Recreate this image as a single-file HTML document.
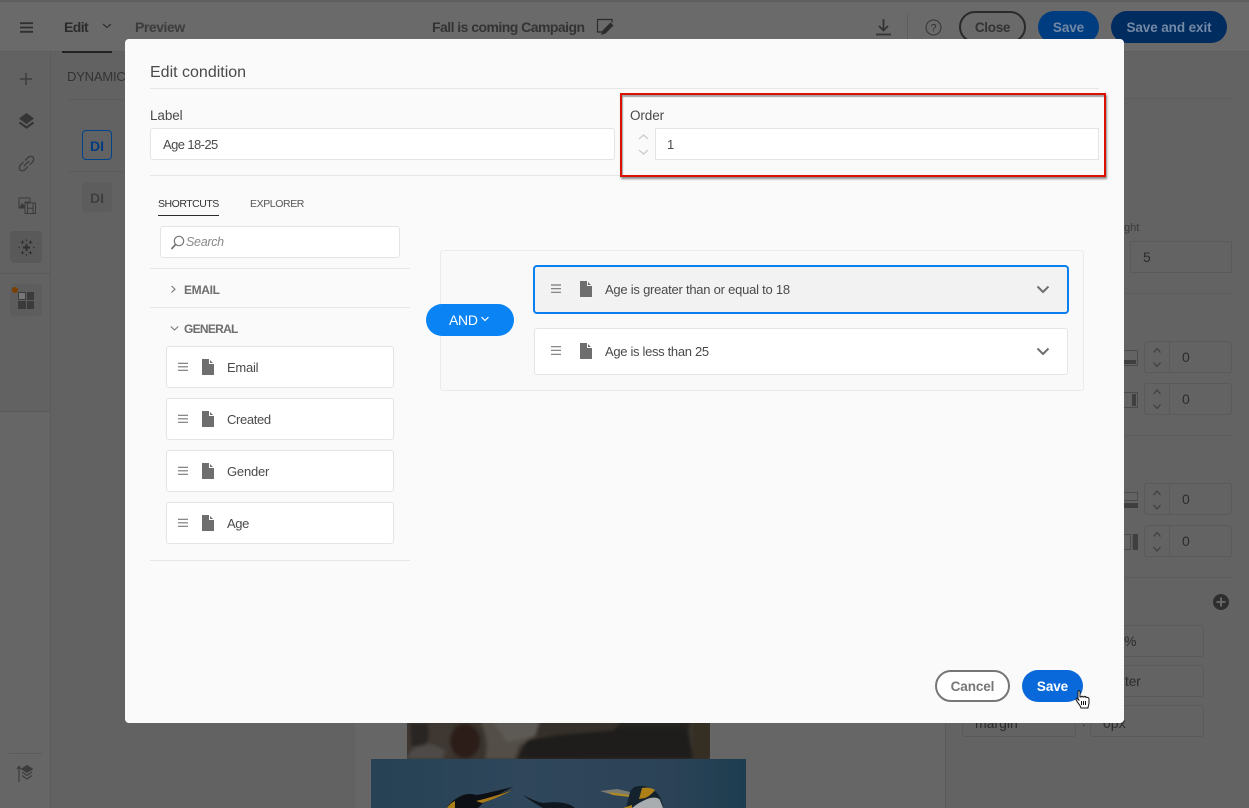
<!DOCTYPE html>
<html><head><meta charset="utf-8"><style>
html,body{margin:0;padding:0;background:#626262}
#r{position:relative;width:1249px;height:808px;overflow:hidden;background:#626262;font-family:"Liberation Sans",sans-serif;color:#4b4b4b;font-size:13px}
#r div,#r svg{position:absolute;box-sizing:border-box}
.t{white-space:nowrap;line-height:20px;height:20px}
.f{border:1px solid #5a5a5a;border-radius:3px}
.w{background:#fff;border:1px solid #e4e4e4;border-radius:3px}
.l{background:#e6e6e6;height:1px}
.n{color:#2c2c2c;font-size:14px}
.x{letter-spacing:-.25px;color:#4a4a4a}
</style></head><body><div id="r">
<!-- background -->
<div style="left:0;top:0;width:1249px;height:52px;background:#6a6a6a;border-bottom:1px solid #5e5e5e"></div>
<div style="left:0;top:0;width:1249px;height:2px;background:#5f5f5f"></div>
<div style="left:0;top:52px;width:51px;height:360px;background:#626262"></div>
<div style="left:0;top:412px;width:51px;height:396px;background:#666"></div>
<div style="left:0;top:411px;width:51px;height:1px;background:#5a5a5a"></div>
<div style="left:50px;top:52px;width:1px;height:756px;background:#5c5c5c"></div>
<div style="left:355px;top:700px;width:1px;height:108px;background:#5e5e5e"></div>
<div style="left:355px;top:720px;width:16px;height:88px;background:#666"></div>
<div style="left:945px;top:52px;width:304px;height:756px;background:#636363"></div>
<div style="left:710px;top:720px;width:235px;height:88px;background:#666"></div>
<div style="left:356px;top:720px;width:51px;height:40px;background:#666"></div>
<div style="left:945px;top:52px;width:1px;height:756px;background:#5a5a5a"></div>

<!-- header -->
<svg style="left:20px;top:22px" width="13" height="11"><path d="M0 1.200H13M0 5.500H13M0 9.800H13" stroke="#2f2f2f" stroke-width="1.800"/></svg>
<div class="t" style="left:64px;top:17px;font-weight:bold;color:#2b2b2b;font-size:14px;letter-spacing:-.6px">Edit</div>
<svg style="left:102px;top:23px" width="10" height="6"><path d="M1 1L5 4.500L9 1" fill="none" stroke="#2f2f2f" stroke-width="1.200"/></svg>
<div style="left:62px;top:51px;width:50px;height:2px;background:#222"></div>
<div class="t" style="left:135px;top:17px;font-weight:bold;color:#3c3c3c;font-size:14px;letter-spacing:-.45px">Preview</div>
<div class="t" style="left:432px;top:17px;font-weight:bold;color:#333;font-size:14px;letter-spacing:-.54px">Fall is coming Campaign</div>
<svg style="left:595px;top:18px" width="20" height="18"><path d="M8 14H2.500V1.500H17V4.500" fill="none" stroke="#2c2c2c" stroke-width="1.200"/><path d="M6 17L7.500 12.500L15.500 4.500L18.500 7.500L10.500 15.500Z" fill="#2c2c2c"/></svg>
<svg style="left:875px;top:18px" width="17" height="18"><path d="M8.500 1V12M4 8L8.500 12.500L13 8M1 16.500H16" fill="none" stroke="#333" stroke-width="1.800"/></svg>
<div style="left:907px;top:13px;width:1px;height:26px;background:#5e5e5e"></div>
<svg style="left:925px;top:19px" width="17" height="17"><circle cx="8.500" cy="8.500" r="7.500" fill="none" stroke="#333" stroke-width="1"/><text x="8.500" y="12.500" text-anchor="middle" font-family="Liberation Sans" font-size="11" fill="#333">?</text></svg>
<div style="left:959px;top:11px;width:67px;height:32px;border:2px solid #2a2a2a;border-radius:16px"></div>
<div class="t" style="left:959px;top:18px;width:67px;text-align:center;font-weight:bold;color:#333;font-size:13.500px;letter-spacing:-.3px">Close</div>
<div style="left:1038px;top:11px;width:61px;height:32px;background:#003c80;border-radius:16px"></div>
<div class="t" style="left:1038px;top:18px;width:61px;text-align:center;font-weight:bold;color:#7389a5;font-size:13.500px;letter-spacing:-.1px">Save</div>
<div style="left:1111px;top:11px;width:116px;height:32px;background:#002c60;border-radius:16px"></div>
<div class="t" style="left:1111px;top:18px;width:116px;text-align:center;font-weight:bold;color:#7389a5;font-size:13.500px;letter-spacing:-.1px">Save and exit</div>

<!-- left rail -->
<svg style="left:20px;top:73px" width="12" height="12"><path d="M6 0V12M0 6H12" stroke="#3c3c3c" stroke-width="1.600"/></svg>
<svg style="left:18px;top:112px" width="17" height="18"><path d="M8.500 1L16 6.500L8.500 12L1 6.500Z" fill="#353535"/><path d="M1.500 10.500L8.500 15.500L15.500 10.500" fill="none" stroke="#353535" stroke-width="2.200"/></svg>
<svg style="left:18px;top:155px" width="17" height="17"><path d="M7 5.500L10 2.500C11.500 1 14 1 15 2S16 5.500 14.500 7L11.500 10M10 11.500L7 14.500C5.500 16 3 16 2 15S1 11.500 2.500 10L5.500 7M6 11L11 6" fill="none" stroke="#3e3e3e" stroke-width="1.400"/></svg>
<svg style="left:18px;top:197px" width="18" height="17"><path d="M1 1H12V5H7V11H1Z" fill="none" stroke="#3a3a3a"/><path d="M1 11L4 6L7 9V11Z" fill="#3a3a3a"/><rect x="7" y="6" width="10.500" height="10.500" fill="none" stroke="#3a3a3a"/><path d="M9.500 6V16.500M15 6V16.500M9.500 11.200H15" stroke="#3a3a3a"/></svg>
<div style="left:10px;top:231px;width:32px;height:32px;background:#595959;border-radius:4px"></div>
<svg style="left:18px;top:239px" width="17" height="17" fill="none" stroke="#303030"><path d="M8.500 5V12M5 8.500H12" stroke-width="2"/><path d="M4.500 1.500V5M2.700 3.200H6.300M12.500 1.500V5M10.700 3.200H14.300M4.500 12V15.500M2.700 13.800H6.300M12.500 12V15.500M10.700 13.800H14.300" stroke-width="1"/><path d="M.5 8.500H2M15 8.500H16.500M8.500 .5V2M8.500 15V16.500" stroke-width="1.200"/></svg>
<div style="left:0;top:273px;width:51px;height:1px;background:#5a5a5a"></div>
<div style="left:10px;top:284px;width:32px;height:32px;background:#5d5d5d;border-radius:4px"></div>
<div style="left:18px;top:292px;width:7.500px;height:7.500px;border:1px solid #3b3b3b;background:#777"></div>
<div style="left:27px;top:292px;width:7px;height:7.500px;background:#3b3b3b"></div>
<div style="left:18px;top:301px;width:7.500px;height:7.500px;background:#3b3b3b"></div>
<div style="left:27px;top:301px;width:7px;height:7.500px;background:#3b3b3b"></div>
<div style="left:12px;top:287px;width:6px;height:6px;border-radius:50%;background:#7d3f00"></div>
<div style="left:9px;top:753px;width:33px;height:1px;background:#5a5a5a"></div>
<svg style="left:16px;top:764px" width="20" height="18" fill="none" stroke="#3c3c3c"><path d="M3 18V3M1 5L3 2.500L5 5" stroke-width="1.200"/><path d="M11 1L17.500 5L11 9L4.500 5Z" fill="#3c3c3c" stroke="none"/><path d="M6 8L11 11.500L16 8M6 11.500L11 15L16 11.500" stroke-width="1.200"/></svg>

<!-- left panel residual -->
<div class="t" style="left:67px;top:67px;color:#333;font-size:13px;letter-spacing:-.2px">DYNAMIC</div>
<div style="left:67px;top:99px;width:58px;height:1px;background:#5c5c5c"></div>
<div style="left:82px;top:130px;width:30px;height:30px;border:1px solid #00428c;border-radius:4px;background:#626262"></div>
<div class="t" style="left:82px;top:136px;width:30px;text-align:center;font-weight:bold;font-size:14px;color:#003c80">DI</div>
<div style="left:67px;top:171px;width:58px;height:1px;background:#5c5c5c"></div>
<div style="left:82px;top:182px;width:30px;height:30px;border-radius:4px;background:#5d5d5d"></div>
<div class="t" style="left:82px;top:188px;width:30px;text-align:center;font-weight:bold;font-size:14px;color:#3f3f3f">DI</div>

<!-- right panel residual -->
<div class="t" style="left:1124px;top:218px;font-size:11px;color:#3a3a3a">ght</div>
<div style="left:1124px;top:98px;width:108px;height:1px;background:#5c5c5c"></div>
<div class="f" style="left:1130px;top:241px;width:102px;height:32px;border-radius:0"></div>
<div class="t n" style="left:1143px;top:247px">5</div>
<div style="left:1124px;top:293px;width:108px;height:1px;background:#5c5c5c"></div>
<div style="left:1124px;top:435px;width:108px;height:1px;background:#5c5c5c"></div>
<div style="left:1124px;top:577px;width:108px;height:1px;background:#5c5c5c"></div>
<!-- steppers -->
<div class="f" style="left:1144px;top:341px;width:88px;height:32px"></div><div style="left:1169px;top:341px;width:1px;height:32px;background:#5a5a5a"></div>
<div class="f" style="left:1144px;top:383px;width:88px;height:32px"></div><div style="left:1169px;top:383px;width:1px;height:32px;background:#5a5a5a"></div>
<div class="f" style="left:1144px;top:483px;width:88px;height:32px"></div><div style="left:1169px;top:483px;width:1px;height:32px;background:#5a5a5a"></div>
<div class="f" style="left:1144px;top:525px;width:88px;height:32px"></div><div style="left:1169px;top:525px;width:1px;height:32px;background:#5a5a5a"></div>
<svg style="left:1144px;top:341px" width="26" height="220" fill="none" stroke="#3e3e3e" stroke-width="1.200"><path d="M9.500 11.500L13 7.500L16.500 11.500M9.500 21.500L13 25.500L16.500 21.500M9.500 53L13 49L16.500 53M9.500 63.500L13 67.500L16.500 63.500M9.500 154L13 150L16.500 154M9.500 164L13 168L16.500 164M9.500 195.500L13 191.500L16.500 195.500M9.500 206L13 210L16.500 206"/></svg>
<div class="t n" style="left:1182px;top:347px">0</div>
<div class="t n" style="left:1182px;top:389px">0</div>
<div class="t n" style="left:1182px;top:489px">0</div>
<div class="t n" style="left:1182px;top:531px">0</div>
<svg style="left:1124px;top:348px" width="15" height="204"><path d="M0 2.500H13.500V17.500H0" fill="none" stroke="#4c4c4c"/><rect x="0" y="12" width="12" height="4" fill="#3f3f3f"/><path d="M0 44.500H13.500V59.500H0" fill="none" stroke="#4c4c4c"/><rect x="8" y="46" width="4" height="12" fill="#3f3f3f"/><path d="M0 144.500H13.500V152.500H0" fill="none" stroke="#4c4c4c"/><rect x="0" y="155" width="14" height="5" fill="#3f3f3f"/><path d="M0 186.500H6.500V201.500H0" fill="none" stroke="#4c4c4c"/><rect x="8.700" y="186" width="5.300" height="16" fill="#3f3f3f"/></svg>
<svg style="left:1213px;top:594px" width="16" height="16"><circle cx="8" cy="8" r="8" fill="#2e2e2e"/><path d="M8 3.500V12.500M3.500 8H12.500" stroke="#666" stroke-width="2"/></svg>
<div class="f" style="left:1090px;top:625px;width:114px;height:32px"></div>
<div class="t n" style="left:1124px;top:631px">%</div>
<div class="f" style="left:1090px;top:665px;width:114px;height:32px"></div>
<div class="t n" style="left:1125px;top:671px;letter-spacing:-.3px">ter</div>
<div class="f" style="left:962px;top:705px;width:114px;height:32px"></div>
<div class="t n" style="left:975px;top:713px">margin</div>
<div class="t" style="left:1082px;top:712px;color:#2c2c2c;font-size:12px">:</div>
<div class="f" style="left:1090px;top:705px;width:114px;height:32px"></div>
<div class="t n" style="left:1103px;top:713px">0px</div>

<!-- images -->
<svg style="left:407px;top:720px;filter:brightness(.58)" width="303" height="39"><defs><filter id="b" x="-5%" y="-20%" width="110%" height="140%"><feGaussianBlur stdDeviation="1.500"/></filter><clipPath id="c1"><rect width="303" height="39"/></clipPath></defs><g clip-path="url(#c1)"><rect width="303" height="39" fill="#655a50"/><g filter="url(#b)"><rect x="0" y="0" width="45" height="39" fill="#6c5e54"/><path d="M3 3H21L22 18L16 28L4 26Z" fill="#45403d"/><path d="M-2 39L8 27L24 24L38 30L36 39Z" fill="#85807b"/><ellipse cx="58" cy="21" rx="15" ry="17" fill="#4c3029"/><path d="M73 0H135L130 14L112 26L108 39H78C82 24 78 12 73 0Z" fill="#8f877c"/><path d="M85 0H140L128 16L100 22Z" fill="#a19a90"/><path d="M133 0H215L205 11L150 16H128Z" fill="#5c5347"/><path d="M110 39L120 20L150 15L206 10L214 3L280 3L286 39Z" fill="#35302d"/><rect x="213" y="0" width="70" height="8" fill="#3f3a34"/><rect x="286" y="0" width="17" height="39" fill="#5a4f3d"/></g></g></svg>
<svg style="left:371px;top:759px" width="375" height="49"><defs><linearGradient id="s" x1="0" x2="1" y1="0" y2="0"><stop offset="0" stop-color="#264254"/><stop offset=".4" stop-color="#2f465b"/><stop offset=".8" stop-color="#2c4357"/><stop offset="1" stop-color="#1d3d50"/></linearGradient></defs><rect width="375" height="49" fill="url(#s)"/><path d="M76 49C78 44 84 40 90 37C96 34 102 35 106 36C118 34 132 30 142 28C136 31 132 33 127 35L142 31C132 36 122 40 112 44L107 49Z" fill="#0c0f14"/><path d="M105 42C118 39 130 35 142 31C136 34 124 40 111 44Z" fill="#a87a18"/><path d="M76 49C78 46 81 43 84 42V49Z" fill="#a87e18"/><path d="M152 36C160 40 166 43 172 44C180 43 188 43 192 44C198 45 202 47 204 49H172C165 45 158 41 152 36Z" fill="#10171f"/><path d="M229 32L246 30L259 33V38L242 36Z" fill="#7c7b72"/><path d="M237 33L259 36V38L242 36Z" fill="#ad8a22"/><path d="M259 33C261 29 264 27 268 27C276 26 284 30 289 38C291 42 292 46 292 49H255Z" fill="#14222e"/><path d="M271 29C276 28 281 29 284 31C281 35 277 38 274 39L268 40Z" fill="#ad8118"/><path d="M261 49C267 44 273 41 279 39C284 38 288 39 289 41L292 49Z" fill="#a9adb0"/><path d="M252 49L261 46V49Z" fill="#ad8118"/></svg>

<!-- modal -->
<div style="left:125px;top:39px;width:999px;height:684px;background:#fafafa;border-radius:4px"></div>
<div class="t" style="left:150px;top:63px;font-size:16px;color:#4a4a4a">Edit condition</div>
<div class="l" style="left:150px;top:88px;width:949px"></div>
<div class="t" style="left:150px;top:106px;color:#4a4a4a;font-size:13.500px;letter-spacing:-.1px">Label</div>
<div class="w" style="left:150px;top:128px;width:465px;height:32px"></div>
<div class="t x" style="left:163px;top:135px;letter-spacing:-.6px">Age 18-25</div>
<div class="l" style="left:150px;top:175px;width:949px"></div>

<div style="left:620px;top:93px;width:486px;height:84px;border:2.500px solid #dc1000;box-shadow:1px 2px 2px rgba(0,0,0,.45),inset 1px 2px 1px rgba(0,0,0,.35)"></div>
<div class="t" style="left:630px;top:106px;color:#4a4a4a;font-size:13.500px;letter-spacing:-.1px">Order</div>
<svg style="left:637px;top:133px" width="14" height="24" fill="none" stroke="#cfcfcf" stroke-width="1.500"><path d="M2 6L6.500 2L11 6M2 17L6.500 21L11 17"/></svg>
<div class="w" style="left:655px;top:128px;width:444px;height:32px;border-radius:0"></div>
<div class="t" style="left:667px;top:135px;color:#4a4a4a">1</div>

<div class="t" style="left:158px;top:194px;font-size:10.500px;color:#333;letter-spacing:-.48px">SHORTCUTS</div>
<div style="left:158px;top:215px;width:61px;height:1px;background:#2c2c2c"></div>
<div class="t" style="left:250px;top:194px;font-size:10.500px;color:#555;letter-spacing:-.4px">EXPLORER</div>
<div class="w" style="left:160px;top:226px;width:240px;height:32px"></div>
<svg style="left:170px;top:235px" width="15" height="15" fill="none" stroke="#777"><circle cx="9" cy="6" r="4.700" stroke-width="1.200"/><path d="M5.500 9.500L1.500 14" stroke-width="1.800"/></svg>
<div class="t" style="left:186px;top:232px;font-style:italic;color:#8a8a8a;font-size:12.500px;letter-spacing:-.3px">Search</div>
<div class="l" style="left:150px;top:268px;width:260px"></div>
<svg style="left:170px;top:285px" width="7" height="9" fill="none" stroke="#777" stroke-width="1.100"><path d="M1.500 1L5 4.200L1.500 7.500"/></svg>
<div class="t" style="left:184px;top:280px;font-weight:bold;font-size:12px;color:#6e6e6e;letter-spacing:-.35px">EMAIL</div>
<div class="l" style="left:150px;top:307px;width:260px"></div>
<svg style="left:170px;top:325px" width="9" height="7" fill="none" stroke="#777" stroke-width="1.100"><path d="M.8 1.500L4.500 5L8.200 1.500"/></svg>
<div class="t" style="left:184px;top:319px;font-weight:bold;font-size:12px;color:#6e6e6e;letter-spacing:-.72px">GENERAL</div>

<div class="w" style="left:166px;top:346px;width:228px;height:42px"></div>
<div class="w" style="left:166px;top:398px;width:228px;height:42px"></div>
<div class="w" style="left:166px;top:450px;width:228px;height:42px"></div>
<div class="w" style="left:166px;top:502px;width:228px;height:42px"></div>
<svg style="left:178px;top:358px" width="38" height="176"><path d="M0 5.300H10M0 8.800H10M0 12.300H10M0 57.300H10M0 60.800H10M0 64.300H10M0 109.300H10M0 112.800H10M0 116.300H10M0 161.300H10M0 164.800H10M0 168.300H10" stroke="#777" stroke-width="1.200"/><path d="M24 1H31L36 6V17H24ZM24 53H31L36 58V69H24ZM24 105H31L36 110V121H24ZM24 157H31L36 162V173H24Z" fill="#6e6e6e"/><path d="M31.500 .5V5.500H36.500M31.500 52.500V57.500H36.500M31.500 104.500V109.500H36.500M31.500 156.500V161.500H36.500" fill="none" stroke="#fff"/></svg>
<div class="t x" style="left:227px;top:358px">Email</div>
<div class="t x" style="left:227px;top:410px;letter-spacing:-.35px">Created</div>
<div class="t x" style="left:227px;top:462px;letter-spacing:-.2px">Gender</div>
<div class="t x" style="left:227px;top:514px;letter-spacing:-.4px">Age</div>
<div class="l" style="left:150px;top:560px;width:260px"></div>

<div style="left:440px;top:250px;width:644px;height:141px;border:1px solid #ebebeb;border-radius:3px;background:#f9f9f9"></div>
<div style="left:426px;top:304px;width:88px;height:32px;background:#0a84f4;border-radius:16px"></div>
<div class="t" style="left:449px;top:310px;color:#fff;font-size:14px;letter-spacing:-.3px">AND</div>
<svg style="left:480px;top:316px" width="10" height="7" fill="none" stroke="#fff" stroke-width="1.200"><path d="M1.500 1L5 4.500L8.500 1"/></svg>
<div style="left:533px;top:265px;width:536px;height:49px;background:#f2f2f2;border:2px solid #0a7ff0;border-radius:4px"></div>
<div class="w" style="left:534px;top:328px;width:534px;height:47px"></div>
<svg style="left:551px;top:280px" width="42" height="80"><path d="M0 5H10M0 8.700H10M0 12.300H10M0 66.700H10M0 70.300H10M0 74.300H10" stroke="#777" stroke-width="1.200"/><path d="M29 1H36L41 6V17H29ZM29 63H36L41 68V79H29Z" fill="#6e6e6e"/><path d="M36.500 .5V5.500H41.500" fill="none" stroke="#f2f2f2"/><path d="M36.500 62.500V67.500H41.500" fill="none" stroke="#fff"/></svg>
<div class="t x" style="left:605px;top:280px;letter-spacing:-.24px">Age is greater than or equal to 18</div>
<div class="t x" style="left:605px;top:342px;letter-spacing:-.32px">Age is less than 25</div>
<svg style="left:1036px;top:285px" width="15" height="72" fill="none" stroke="#6e6e6e" stroke-width="2"><path d="M1.500 1.500L7 7L12.500 1.500M1.500 63.500L7 69L12.500 63.500"/></svg>

<div style="left:935px;top:670px;width:75px;height:32px;border:2px solid #767676;border-radius:16px;background:#fff"></div>
<div class="t" style="left:935px;top:677px;width:75px;text-align:center;font-weight:bold;color:#777;font-size:13.500px;letter-spacing:-.1px">Cancel</div>
<div style="left:1022px;top:670px;width:61px;height:32px;background:#0a69da;border-radius:16px"></div>
<div class="t" style="left:1022px;top:677px;width:61px;text-align:center;font-weight:bold;color:#fff;font-size:13.500px;letter-spacing:-.1px">Save</div>
<svg style="left:1075px;top:690px" width="16" height="19"><path d="M3 1.500C3 .5 5 .5 5 1.500V7H6C6 6 8 6 8 7H9C9 6 11 6 11 7.500C12 7 14 7.500 14 9V13C14 15 13 16 13 18H6C6 16 1 11 1 9.500C1 8 3 8 4 10H3Z" fill="#fff" stroke="#111" stroke-width="1"/><path d="M6.500 11V15M8.500 11V15M10.500 11V15" stroke="#111" stroke-width="1"/></svg>
</div></body></html>
